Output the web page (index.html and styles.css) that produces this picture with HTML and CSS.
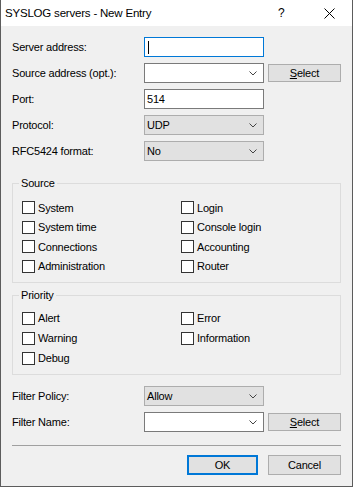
FILE: index.html
```html
<!DOCTYPE html>
<html lang="en">
<head>
    <meta charset="UTF-8">
    <title>SYSLOG servers - New Entry</title>
    <link rel="stylesheet" href="styles.css">
</head>
<body>
    <div class="window">
        <div class="titlebar">
            <span class="title">SYSLOG servers - New Entry</span>
            <span class="help">?</span>
            <svg class="close" width="11" height="11" viewBox="0 0 11 11">
                <path d="M0.5 0.5 L10.5 10.5 M10.5 0.5 L0.5 10.5" stroke="#000" stroke-width="1" fill="none"/>
            </svg>
        </div>

        <div class="content">
            <div class="row">
                <label class="lbl">Server address:</label>
                <div class="field focus"><span class="caret"></span></div>
            </div>
            <div class="row">
                <label class="lbl">Source address (opt.):</label>
                <div class="field">
                    <svg class="chev" width="8" height="5" viewBox="0 0 8 5"><path d="M0.5 0.5 L4 4 L7.5 0.5" stroke="#444" fill="none"/></svg>
                </div>
                <button class="btn"><u>S</u>elect</button>
            </div>
            <div class="row">
                <label class="lbl">Port:</label>
                <div class="field">514</div>
            </div>
            <div class="row">
                <label class="lbl">Protocol:</label>
                <div class="field drop">UDP
                    <svg class="chev" width="8" height="5" viewBox="0 0 8 5"><path d="M0.5 0.5 L4 4 L7.5 0.5" stroke="#444" fill="none"/></svg>
                </div>
            </div>
            <div class="row">
                <label class="lbl">RFC5424 format:</label>
                <div class="field drop">No
                    <svg class="chev" width="8" height="5" viewBox="0 0 8 5"><path d="M0.5 0.5 L4 4 L7.5 0.5" stroke="#444" fill="none"/></svg>
                </div>
            </div>

            <fieldset class="group source">
                <legend>Source</legend>
                <div class="checks">
                    <div class="check"><span class="box"></span>System</div>
                    <div class="check"><span class="box"></span>Login</div>
                    <div class="check"><span class="box"></span>System time</div>
                    <div class="check"><span class="box"></span>Console login</div>
                    <div class="check"><span class="box"></span>Connections</div>
                    <div class="check"><span class="box"></span>Accounting</div>
                    <div class="check"><span class="box"></span>Administration</div>
                    <div class="check"><span class="box"></span>Router</div>
                </div>
            </fieldset>

            <fieldset class="group priority">
                <legend>Priority</legend>
                <div class="checks">
                    <div class="check"><span class="box"></span>Alert</div>
                    <div class="check"><span class="box"></span>Error</div>
                    <div class="check"><span class="box"></span>Warning</div>
                    <div class="check"><span class="box"></span>Information</div>
                    <div class="check"><span class="box"></span>Debug</div>
                </div>
            </fieldset>

            <div class="filters">
                <div class="row">
                    <label class="lbl">Filter Policy:</label>
                    <div class="field drop">Allow
                        <svg class="chev" width="8" height="5" viewBox="0 0 8 5"><path d="M0.5 0.5 L4 4 L7.5 0.5" stroke="#444" fill="none"/></svg>
                    </div>
                </div>
                <div class="row">
                    <label class="lbl">Filter Name:</label>
                    <div class="field">
                        <svg class="chev" width="8" height="5" viewBox="0 0 8 5"><path d="M0.5 0.5 L4 4 L7.5 0.5" stroke="#444" fill="none"/></svg>
                    </div>
                    <button class="btn"><u>S</u>elect</button>
                </div>
            </div>

            <div class="sep"></div>

            <div class="footer">
                <button class="btn ok">OK</button>
                <button class="btn">Cancel</button>
            </div>
        </div>
    </div>
</body>
</html>
```

FILE: styles.css
```css
html, body { margin: 0; padding: 0; }
body { font-family: "Liberation Sans", Arial, sans-serif; font-size: 11px; letter-spacing: -0.2px; color: #000; background: #fff; }

.window { width: 353px; height: 487px; box-sizing: border-box; border: 1px solid #5c5c5c; border-top: none; background: #f0f0f0; }

.titlebar { height: 26px; background: #fff; display: flex; align-items: center; padding-left: 4px; }
.title { font-size: 11.5px; flex: 1; padding-bottom: 1px; }
.help { font-size: 12px; width: 12px; margin-right: 34px; padding-bottom: 1px; }
.close { margin-right: 17px; margin-top: 1px; }

.content { padding: 11px 11px 0 11px; }

.row { display: flex; align-items: center; height: 20px; }
.row + .row { margin-top: 6px; }
.lbl { width: 132px; }

.field { width: 120px; height: 20px; box-sizing: border-box; border: 1px solid #7a7a7a; background: #fff; display: flex; align-items: center; padding: 0 6px 0 2px; }
.field.focus { border-color: #0078d7; }
.field.drop { background: #e1e1e1; border-color: #adadad; }
.chev { margin-left: auto; }
.caret { width: 1px; height: 13px; background: #000; margin-left: 1px; }

.btn { font: inherit; letter-spacing: inherit; color: #000; margin: 0 0 0 4px; padding: 0; width: 73px; height: 18px; box-sizing: border-box; background: #e1e1e1; border: 1px solid #adadad; }

.group { margin: 16px 0 0 0; padding: 8px 6px 6px 6px; border: 1px solid #dcdcdc; }
.group legend { padding: 0 2px; line-height: 13px; margin-left: 0; }
.group.priority { margin-top: 6px; padding-top: 6px; }

.checks { display: grid; grid-template-columns: 159px 1fr; grid-auto-rows: 19.5px; margin-left: 3px; }
.priority .checks { grid-auto-rows: 20px; }
.check { display: flex; align-items: center; }
.box { width: 13px; height: 13px; box-sizing: border-box; border: 1px solid #333; background: #fff; margin-right: 3px; }

.filters { margin-top: 11px; }

.sep { height: 1px; background: #a0a0a0; margin-top: 13px; }

.footer { display: flex; justify-content: flex-end; margin-top: 9px; }
.footer .btn { height: 20px; margin-left: 10px; }
.footer .btn.ok { width: 71px; border: 2px solid #0078d7; }
```
